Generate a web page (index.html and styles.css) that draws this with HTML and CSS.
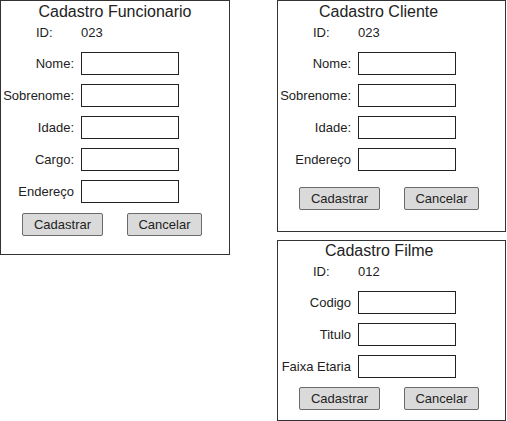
FILE: index.html
```html
<!DOCTYPE html>
<html>
<head>
<meta charset="utf-8">
<link rel="stylesheet" href="styles.css">
</head>
<body>
<div class="page">
  <section class="panel panel-func">
    <div class="title title-func">Cadastro Funcionario</div>
    <div class="id-row"><span class="id-label">ID:</span><span class="id-value">023</span></div>
    <div class="fields">
      <div class="field"><span class="label">Nome:</span><span class="input"></span></div>
      <div class="field"><span class="label">Sobrenome:</span><span class="input"></span></div>
      <div class="field"><span class="label">Idade:</span><span class="input"></span></div>
      <div class="field"><span class="label">Cargo:</span><span class="input"></span></div>
      <div class="field"><span class="label">Endereço</span><span class="input"></span></div>
    </div>
    <div class="buttons buttons-func"><span class="btn btn-ok">Cadastrar</span><span class="btn btn-cancel">Cancelar</span></div>
  </section>
  <div class="column">
    <section class="panel panel-cli">
      <div class="title title-side">Cadastro Cliente</div>
      <div class="id-row"><span class="id-label">ID:</span><span class="id-value">023</span></div>
      <div class="fields">
        <div class="field"><span class="label">Nome:</span><span class="input"></span></div>
        <div class="field"><span class="label">Sobrenome:</span><span class="input"></span></div>
        <div class="field"><span class="label">Idade:</span><span class="input"></span></div>
        <div class="field"><span class="label">Endereço</span><span class="input"></span></div>
      </div>
      <div class="buttons buttons-cli"><span class="btn btn-ok">Cadastrar</span><span class="btn btn-cancel">Cancelar</span></div>
    </section>
    <section class="panel panel-film">
      <div class="title title-side title-film">Cadastro Filme</div>
      <div class="id-row"><span class="id-label">ID:</span><span class="id-value">012</span></div>
      <div class="fields">
        <div class="field"><span class="label">Codigo</span><span class="input"></span></div>
        <div class="field"><span class="label">Titulo</span><span class="input"></span></div>
        <div class="field"><span class="label">Faixa Etaria</span><span class="input"></span></div>
      </div>
      <div class="buttons buttons-film"><span class="btn btn-ok">Cadastrar</span><span class="btn btn-cancel">Cancelar</span></div>
    </section>
  </div>
</div>
</body>
</html>
```
FILE: styles.css
```css
* { box-sizing: border-box; }
html, body { margin: 0; padding: 0; background: #fff; }
body {
  font-family: "Liberation Sans", Arial, sans-serif;
  color: #222;
  font-size: 13px;
}
.page {
  display: flex;
  align-items: flex-start;
  gap: 47px;
  width: 507px;
}
.column {
  display: flex;
  flex-direction: column;
  gap: 8px;
}
.panel {
  border: 1px solid #333;
  background: #fff;
}
.panel-func { width: 230px; height: 255px; }
.panel-cli { width: 229px; height: 232px; }
.panel-film { width: 229px; height: 181px; }

.title {
  font-size: 16px;
  height: 20px;
  line-height: 20px;
  margin-top: 1px;
  white-space: nowrap;
}
.title-func { text-align: center; }
.title-side { padding-left: 41px; }
.title-film { padding-left: 47px; margin-top: 0; }

.id-row {
  display: flex;
  height: 16px;
  line-height: 16px;
  margin-top: 3px;
  padding-left: 35px;
}
.id-label { width: 45px; }

.fields {
  display: flex;
  flex-direction: column;
  gap: 9px;
  margin-top: 11px;
}
.field {
  display: flex;
  align-items: center;
  height: 23px;
}
.label {
  width: 80px;
  padding-right: 7px;
  text-align: right;
  white-space: nowrap;
  display: flex;
  justify-content: flex-end;
}
.input {
  width: 98px;
  height: 23px;
  border: 1px solid #222;
  background: #fff;
}

.buttons {
  display: flex;
  gap: 24px;
  padding-left: 21px;
}
.buttons-func { margin-top: 10px; }
.buttons-cli { margin-top: 16px; }
.buttons-film { margin-top: 9px; }
.btn {
  height: 23px;
  line-height: 21px;
  border: 1px solid #6a6a6a;
  border-radius: 2px;
  background: #dadada;
  text-align: center;
  white-space: nowrap;
}
.btn-ok { width: 81px; }
.btn-cancel { width: 75px; }
```
